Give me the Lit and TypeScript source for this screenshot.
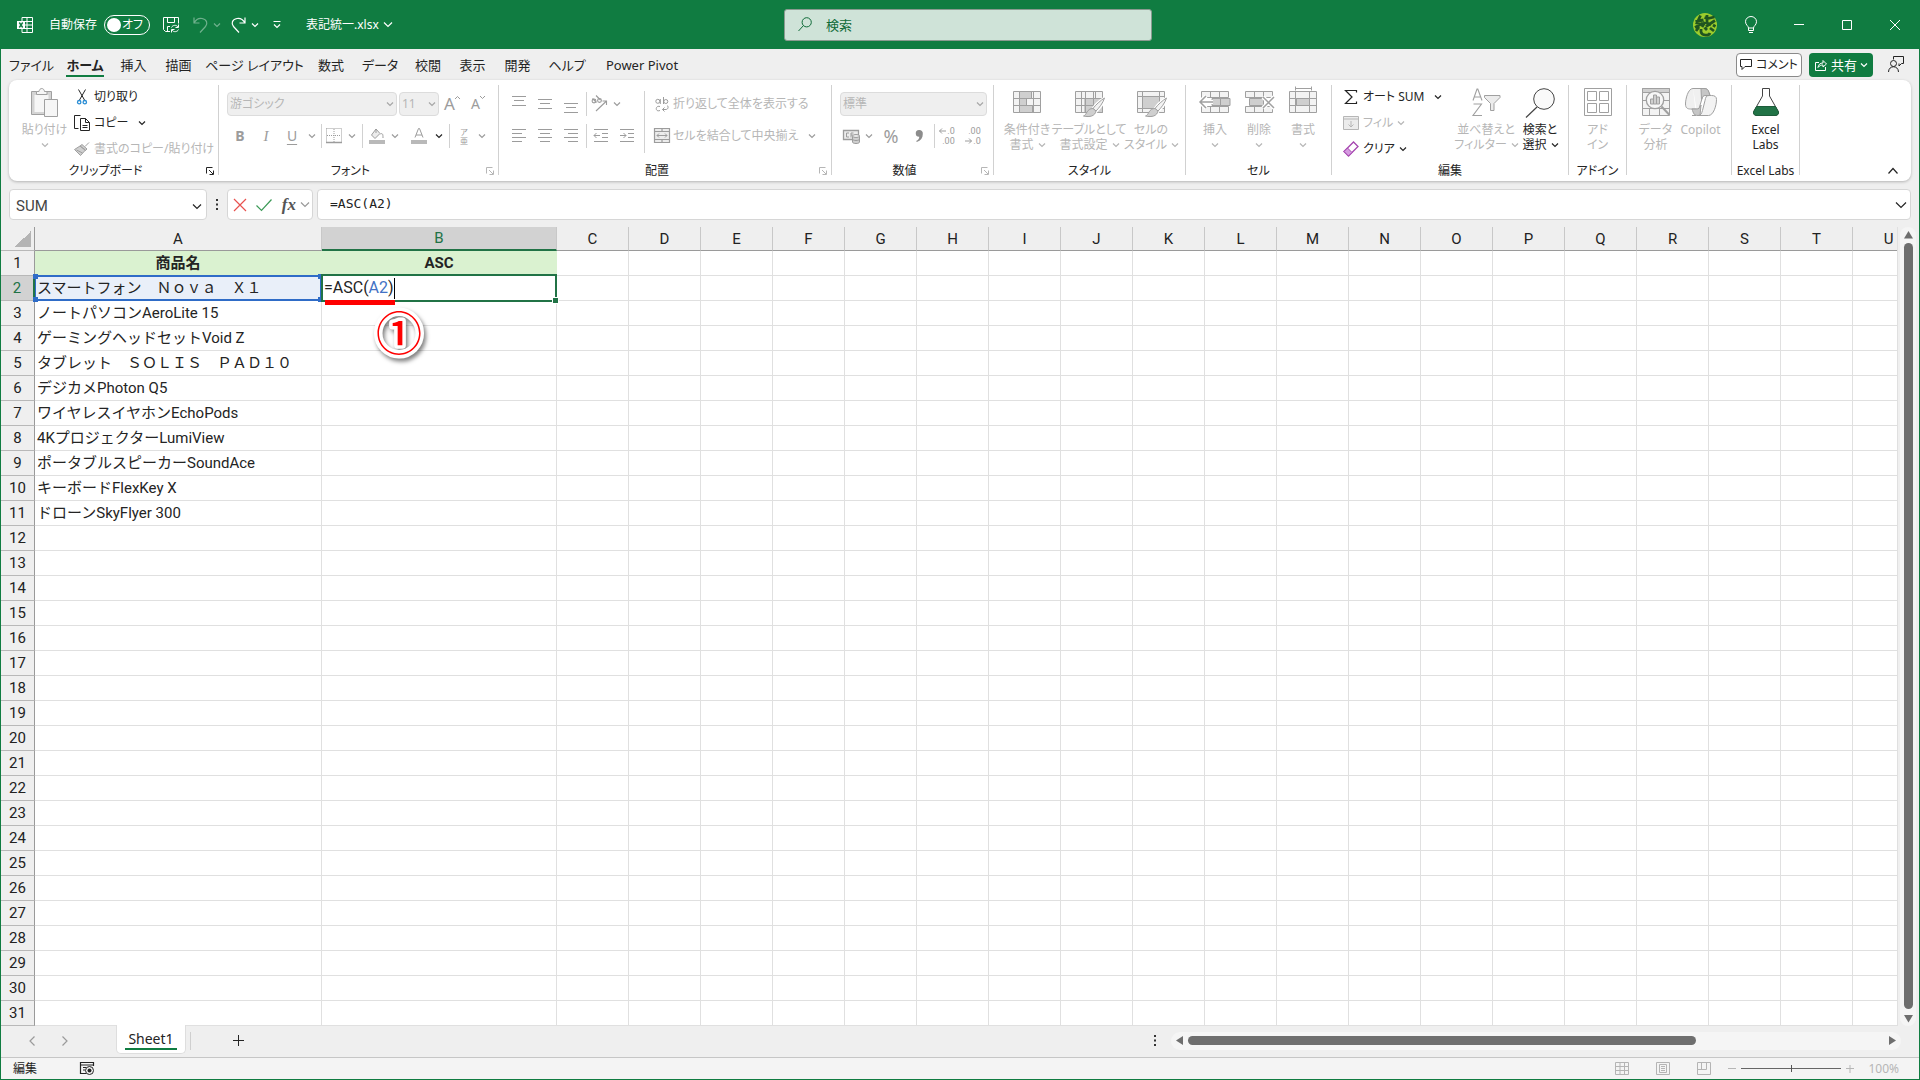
import { LitElement, html, svg, css, nothing } from "lit";
import type { TemplateResult } from "lit";
import { customElement, property, state } from "lit/decorators.js";
import { classMap } from "lit/directives/class-map.js";

/* ---------- shared styles ---------- */

const base = css`
  :host {
    display: block;
    font-family: "Noto Sans", "Noto Sans CJK JP", sans-serif;
    font-size: 12px;
    line-height: 16px;
    color: #242424;
    --brand: #107c41;
    --muted: #b6b6b6;
    --line: #a0a0a0;
    --surface: #efefef;
  }
  *,
  *::before,
  *::after {
    box-sizing: border-box;
  }
  button,
  input,
  select {
    font: inherit;
    color: inherit;
    background: none;
    border: 0;
    padding: 0;
    margin: 0;
    outline: 0;
    font-feature-settings: inherit;
  }
  button {
    display: inline-flex;
    align-items: center;
    justify-content: center;
    white-space: nowrap;
  }
  svg {
    display: block;
    flex: none;
    fill: none;
    stroke: currentColor;
    overflow: visible;
  }
`;

/* ---------- icons ---------- */

const icon = (w: number, h: number, body: unknown) =>
  html`<svg width=${w} height=${h} viewBox="0 0 ${w} ${h}" aria-hidden="true">${body}</svg>`;

const chevron = (w = 6) =>
  icon(w, w / 2 + 1, svg`<path d="M0 .5l${w / 2} ${w / 2}l${w / 2} -${w / 2}" stroke-width="1.2"/>`);

const lines = (rows: [number, number, number][], size = 16) =>
  icon(size, size, svg`<path d=${rows.map(([x, y, w]) => `M${x} ${y}.5h${w}`).join("")} />`);

const G = "#a0a0a0";
const F = "#ececec";
const D = "#cfcfcf";

const gridBox = (extra: unknown) => icon(
  28, 28,
  svg`<path d="M.5 3.500h27v21h-27z" fill="#f3f3f3" stroke=${G}/>
    <path d="M.5 10.500h27M.5 17.500h27M6.500 3.500v21M20.500 3.500v21" stroke=${G}/>${extra}`,
);

const brush = svg`
  <path d="M29 10.500c-4 2.500-9 7-11 10.500l3 2.500c3-3 7-8 8.500-12z" fill="#f3f3f3" stroke="#fff" stroke-width="3"/>
  <path d="M29.500 10c-4 2.500-9 7-11.500 10.500l3 2.500c3-3 7-8 8.500-13z" fill="#f3f3f3" stroke=${G}/>
  <path d="M18 20.500l3 2.500c-1 5-6 6.500-12.500 5c3.500-1 3-7.500 9.500-7.500z" fill=${D} stroke=${G}/>`;

const icons = {
  excel: icon(16, 16, svg`<path d="M5 4V.5h10.500v15H5V12M5 4.500h10.500M5 8h10.500M5 11.500h10.500M10 .5v15"/>
    <path d="M0 4h8v8H0z" fill="#fff" stroke="none"/><path d="M2.300 5.500l3.400 5M5.700 5.500l-3.400 5" stroke="#107c41" stroke-width="1.400"/>`),
  save: icon(16, 16, svg`<path d="M7 14.500H2.500l-2-2V.5h15v6M4.500 .5v5h7v-5M4.500 14.500v-5H7"/>
    <path d="M8.500 10.500c1-2.500 5-3 6.500-.5M15.500 7.500v3h-3M15.500 12.500c-1 2.500-5 3-6.500 .5M8.500 15.500v-3h3"/>`),
  undo: icon(15, 16, svg`<path d="M1 .5v5.500h5.500M1 6c2-3.500 5-5 8-4.500c5 1 6 5 3.500 8l-5.500 6" stroke-width="1.200"/>`),
  redo: icon(15, 16, svg`<path d="M14 .5v5.500H8.500M14 6c-2-3.500-5-5-8-4.500c-5 1-6 5-3.500 8l5.500 6" stroke-width="1.200"/>`),
  qat: icon(8, 8, svg`<path d="M.5 .5h7M1 3.500l3 3 3-3" stroke-width="1.200"/>`),
  search: icon(14, 15, svg`<circle cx="8.700" cy="5.300" r="4.600"/><path d="M5.500 8.500L.5 14"/>`),
  avatar: icon(24, 24, svg`<circle cx="12" cy="12" r="12" fill="#9ccc2c" stroke="none"/>
    <path d="M2.500 8.500l8-1.500M7.500 2.500L4 10l6 1.500M2 14.500l8-4.500M11.500 4.500l3 1 7-1.500M14 2v8l4 2M22 7.500l-9 6M20 12l2.500 1.500M6 14l-3 4M8 16v3c1 4 8 4 9 1M11.500 14.500l2.500 2.500M17 15l4 3M12 9l-3 5" stroke="#1f5420" stroke-width="2.800"/>`),
  bulb: icon(12, 17, svg`<path d="M3.500 12c0-2-3-3-3-6.300a5.500 5.200 0 0 1 11 0c0 3.300-3 4.300-3 6.300zM3.500 12v2.500h5V12M4 16.500h4"/>`),
  min: icon(10, 10, svg`<path d="M0 4.500h10"/>`),
  max: icon(10, 10, svg`<path d="M.5 .5h9v9h-9z"/>`),
  close: icon(10, 10, svg`<path d="M0 0l10 10M10 0L0 10"/>`),
  comment: icon(12, 11, svg`<path d="M.5 .5h11v7H5l-3 3v-3H.5z"/>`),
  share: icon(12, 12, svg`<path d="M4 3.500H.5v8h10V8M3 8.500c.5-3 2-4.500 5-4.500V1.500L11.500 5 8 8V6C6 6 4.500 6.500 3 8.500z"/>`),
  present: icon(16, 17, svg`<path d="M5.500 3.500V.5h10v7h-2l-2.500 2.500V7.500"/><circle cx="5.500" cy="7.500" r="3"/><path d="M.5 16c0-7 10-7 10 0"/>`),
  paste: icon(28, 30, svg`<path d="M.5 3.500h20v23H.5z" fill="#d4d4d4" stroke=${G}/><path d="M3.500 7h14v17h-14z" fill="#f6f6f6" stroke="none"/>
    <path d="M5.500 6.500v-3h2.500c.5-4 5-4 5.500 0H16v3z" fill="#f6f6f6" stroke=${G}/><path d="M13.500 11.500h13v17h-13z" fill="#f6f6f6" stroke=${G}/>`),
  cut: icon(10, 16, svg`<path d="M1.500 .5L7.500 11M8.500 .5L2.500 11"/><circle cx="2.200" cy="13.200" r="1.700" stroke="#2a8dd4" stroke-width="1.300"/><circle cx="7.800" cy="13.200" r="1.700" stroke="#2a8dd4" stroke-width="1.300"/>`),
  copy: icon(16, 16, svg`<path d="M4.500 13.500h-4V.5h6"/><path d="M6.500 3.500h5l4 4v8h-9zM11.500 3.500v4h4M8.500 10.500h5M8.500 12.500h5"/>`),
  format: icon(16, 14, svg`<path d="M15 .5l-4 4M8 2.500l5 4.500-1.500 1.500L6 4zM6 4L.5 7.500l6 6 5-5.500z" fill=${D} stroke=${G}/><path d="M2.500 8l6 3" stroke=${G}/>`),
  borders: icon(16, 16, svg`<path d="M.5 .5h15v14M.5 .5v14M8 1v13M1 7.500h14" stroke-dasharray="1 1"/><path d="M0 14.500h16" stroke-width="1.500"/>`),
  fill: icon(16, 16, svg`<path d="M7 1l4 4.500-5 5L2.500 7z" fill=${F}/><path d="M7 1v4M11.500 6c2-1 2.500 0 2.500 4"/><path d="M0 12h16v4H0z" fill="#b9b9b9" stroke="none"/>`),
  fontColor: icon(16, 16, svg`<path d="M4 9.500L7.500 .5h1l3.500 9M5 7h6"/><path d="M0 12h16v4H0z" fill="#b9b9b9" stroke="none"/>`),
  orient: icon(16, 16, svg`<g stroke-width="1.100"><circle cx="3" cy="5" r="1.900"/><path d="M1.500 2.500l4 4"/><circle cx="8.500" cy="4.500" r="1.900"/><path d="M5 -.5l4.500 4.500M5 15L15.500 5M11.500 5h4v4"/></g>`),
  wrap: icon(14, 15, svg`<circle cx="2.800" cy="4.300" r="2"/><path d="M5.300 2v5M8.500 0v7"/><circle cx="10.800" cy="4.500" r="2"/><path d="M5 9.500c-5-1.500-5 6 0 4M12 8.500c2 1 1 4-1 4H7.500M9.500 10.500l-2 2 2 2"/>`),
  merge: icon(16, 16, svg`<path d="M.5 .5h15v14h-15zM.5 3.500h15M.5 11.500h15M8 .5v3M8 11.500v3" fill=${F} stroke-width="1.200"/><path d="M3 7.500h10M5 5.500l-2 2 2 2M11 5.500l2 2-2 2"/>`),
  currency: icon(17, 15, svg`<path d="M.5 1.500h15v9H.5z" fill=${F} stroke-width="1.300"/><path d="M6 4H3.500v4H6M8 8.500V4h2.500M8 6h2"/>
    <path d="M9.500 7v6c0 2 7 2 7 0V7z" fill=${D}/><ellipse cx="13" cy="7" rx="3.500" ry="1.500" fill=${F}/><path d="M9.500 10c0 2 7 2 7 0"/>`),
  comma: icon(8, 12, svg`<path d="M4 0a3.500 3.500 0 0 1 3.800 4c0 4-2 6.500-6 8l-.6-.9c2-1 3-2.400 3.100-4.300A3.400 3.400 0 0 1 4 0z" fill="#8c8c8c" stroke="none"/>`),
  cond: gridBox(svg`<path d="M6.500 3.500h12v7h-12zM6.500 10.500h7v7h-7zM6.500 17.500h13v7h-13z" fill=${D} stroke=${G}/>`),
  tableFmt: gridBox(svg`<path d="M10 10.500h17.500v14H10z" fill=${D} stroke=${G}/><path d="M10.500 3.500v21M18.500 3.500v21M.5 17.500h27" stroke=${G}/>${brush}`),
  cellStyle: icon(28, 28, svg`<path d="M.5 3.500h27v21h-27z" fill="#f3f3f3" stroke=${G}/><path d="M.5 8.500h27M.5 20.500h27M5.500 3.500v21M22.500 3.500v21" stroke=${G}/>
    <path d="M5.500 8.500h17v12h-17z" fill=${D} stroke=${G}/>${brush}`),
  insert: icon(28, 28, svg`<path d="M.5 3.500h27v6h-27zM.5 18.500h27v6h-27zM9.500 3.500v6M18.500 3.500v6M9.500 18.500v6M18.500 18.500v6" fill="#f3f3f3" stroke=${G}/>
    <path d="M11 10.500h18v7H11zM19.500 10.500v7" fill=${D} stroke=${G}/><path d="M12 14H-1M5 8l-6 6 6 6" stroke="#fff" stroke-width="4"/><path d="M12 14H-1M5 8l-6 6 6 6" stroke=${G} stroke-width="1.500"/>`),
  remove: icon(28, 28, svg`<path d="M.5 3.500h27v6h-27zM.5 18.500h27v6h-27zM9.500 3.500v6M18.500 3.500v6M9.500 18.500v6M18.500 18.500v6" fill="#f3f3f3" stroke=${G}/>
    <path d="M4.500 10.500h14v7h-14z" fill=${D} stroke=${G}/><path d="M18 9l11 11M29 9L18 20" stroke="#fff" stroke-width="4"/><path d="M18 9l11 11M29 9L18 20" stroke=${G} stroke-width="1.500"/>`),
  cellFmt: gridBox(svg`<path d="M7.500 10.500h13v7h-13z" fill=${D} stroke=${G}/><path d="M7 .5h15M6.500 -1.500v4M22.500 -1.500v4" stroke=${G}/>`),
  sigma: icon(12, 14, svg`<path d="M11.500 2.500v-2H.5L7 7 .5 13.500h11v-2" stroke-width="1.200"/>`),
  fillDown: icon(16, 14, svg`<path d="M.5 .5h15v13H.5z" fill=${F}/><path d="M.5 3h15M8 5v6M5.500 8.500L8 11l2.500-2.500"/>`),
  clear: icon(16, 16, svg`<path d="M1 10.500L10.500 1l4.500 4.500L5.500 15z" stroke="#a646b0" stroke-width="1.300"/><path d="M1 10.500L4.500 7 9 11.500 5.500 15z" fill="#d59be0" stroke="#a646b0"/>`),
  sort: icon(28, 28, svg`<path d="M1 12.500L5 1h.8L10 12.500M2.500 9h6M1.500 16h8L1 27.500h9" stroke=${G} stroke-width="1.100"/><path d="M12.500 7.500h15.500v2l-6 6v7h-3.500v-7l-6-6z" fill=${F} stroke=${G}/>`),
  find: icon(30, 30, svg`<circle cx="19" cy="11" r="10.300" fill="#fafafa" stroke="#444"/><path d="M12 19L1 29.500" stroke="#444" stroke-width="1.200"/>`),
  addin: icon(28, 28, svg`<path d="M.5 .5h27v27H.5zM3.500 3.500h9v9h-9zM15.500 3.500h9v9h-9zM3.500 15.500h9v9h-9zM15.500 15.500h9v9h-9z" stroke=${G}/>`),
  analyze: icon(28, 28, svg`<path d="M.5 .5h27v27H.5z" fill="#f3f3f3" stroke=${G}/><path d="M.5 .5h27v4H.5z" fill=${D} stroke=${G}/><path d="M.5 12.500h27M.5 20.500h27M7.500 20v7M17.500 20v7" stroke=${G}/>
    <circle cx="13" cy="12" r="8.700" fill="#f7f7f7" stroke=${G} stroke-width="1.300"/><path d="M8.500 11h3v5h-3zM11.500 7h3v9h-3zM14.500 9h3v7h-3z" fill=${D} stroke=${G}/><path d="M19.500 18.500l8 8.500" stroke=${G} stroke-width="2"/>`),
  copilot: icon(32, 28, svg`<path d="M8 .5h11c3 0 4 1 5 4l1 3h-7l-4 13c-1.500 5-3 7-7 7h4M8 .5C3 .5 .5 11 .5 16c0 4 2 5 5 5h6" fill="#f0f0f0" stroke=${G}/>
    <path d="M16 .5h3c3 0 4 1 5 4l1 3h-4c-3 0-3.500 1-4.500 4z" fill="#c6c6c6" stroke=${G}/><path d="M15 27.500h-2c-4 0-4.500-2-6-6.500h4c3 0 4-1 5-4z" fill="#c6c6c6" stroke=${G}/>
    <path d="M21 7.500h5.500c3 0 5 1 5 4c0 6-3 16-8 16H13c3 0 3.500-2 4.500-5l2.500-10c.7-3 1-5 4-5z" fill="#f3f3f3" stroke=${G}/>`),
  flask: icon(26, 28, svg`<path d="M9.500 .5h7v7.500l8.500 15c1 2.500 0 4.500-3 4.500H4c-3 0-4-2-3-4.500L9.500 8z" fill="#fff" stroke="#444"/><path d="M3.500 18.500h19l3 5.500c.5 2-1 3.500-3.500 3.500H4C1.500 27.500 0 26 .5 24z" fill="#217346" stroke="#1d5c3a"/>`),
  collapse: icon(10, 6, svg`<path d="M.5 5.500l4.500-5 4.500 5" stroke-width="1.200"/>`),
  launch: icon(8, 8, svg`<path d="M.5 6.500v-6h6M3 3l4 4M7.500 3.500v4h-4"/>`),
  cancel: icon(12, 12, svg`<path d="M0 0l12 12M12 0L0 12" stroke="#e8524f" stroke-width="1.200"/>`),
  accept: icon(16, 12, svg`<path d="M.5 6.500l5 5L15.500 .5" stroke="#3c9a57" stroke-width="1.200"/>`),
  kebab: icon(2, 11, svg`<path d="M0 0h2v2H0zM0 4.500h2v2H0zM0 9h2v2H0z" fill="#333" stroke="none"/>`),
  prev: icon(6, 10, svg`<path d="M5.500 .5L1 5l4.500 4.500" stroke-width="1.200"/>`),
  next: icon(6, 10, svg`<path d="M.5 .5L5 5 .5 9.500" stroke-width="1.200"/>`),
  plus: icon(11, 11, svg`<path d="M5.500 0v11M0 5.500h11"/>`),
  triUp: icon(9, 8, svg`<path d="M4.500 0l4.500 7.500H0z" fill="#6e6e6e" stroke="none"/>`),
  triDown: icon(9, 8, svg`<path d="M4.500 7.500L9 0H0z" fill="#6e6e6e" stroke="none"/>`),
  triLeft: icon(7, 9, svg`<path d="M0 4.500L7 0v9z" fill="#6e6e6e" stroke="none"/>`),
  triRight: icon(7, 9, svg`<path d="M7 4.500L0 0v9z" fill="#6e6e6e" stroke="none"/>`),
  macro: icon(15, 13, svg`<path d="M6 11.500H.5V.5h13V4M.5 3h13M3 5.500h3M3 8h2" stroke-width="1.200"/><circle cx="9.500" cy="8.500" r="4"/><circle cx="9.500" cy="8.500" r="2" fill="#222" stroke="none"/>`),
  viewGrid: icon(14, 13, svg`<path d="M.5 .5h13v12H.5zM.5 4.500h13M.5 8.500h13M5 .5v12M9.500 .5v12"/>`),
  viewPage: icon(14, 13, svg`<path d="M.5 .5h13v12H.5zM3.500 2.500h7v8h-7zM5 4.500h4M5 6.500h4M5 8.500h4"/>`),
  viewBreak: icon(14, 13, svg`<path d="M.5 .5h13v12H.5zM4.500 .5v7M.5 7.500h9v-7"/>`),
};

/* ---------- title bar ---------- */

@customElement("xl-titlebar")
class TitleBar extends LitElement {
  static styles = [
    base,
    css`
      .bar {
        display: grid;
        grid-template-columns: 1fr 368px 1fr;
        align-items: center;
        height: 49px;
        padding: 0 1px 0 17px;
        margin: 0 -1px;
        background: var(--brand);
        color: #fff;
        font-feature-settings: "palt";
      }
      .left {
        display: flex;
        align-items: center;
      }
      .auto {
        display: flex;
        align-items: center;
        gap: 7px;
        margin: 0 13px 0 16px;
      }
      .toggle {
        width: 46px;
        height: 20px;
        padding: 0 6px 0 2px;
        border: 1px solid #fff;
        border-radius: 10px;
        justify-content: space-between;
      }
      .knob {
        width: 14px;
        height: 14px;
        border-radius: 50%;
        background: #fff;
      }
      .quick {
        display: flex;
        align-items: center;
      }
      .quick button {
        height: 32px;
      }
      .undo,
      .redo {
        gap: 6px;
      }
      .undo {
        margin-left: 14px;
        opacity: 0.4;
      }
      .redo {
        margin-left: 11px;
      }
      .more {
        margin-left: 15px;
      }
      .file {
        gap: 5px;
        margin-left: 25px;
      }
      .search {
        display: flex;
        align-items: center;
        gap: 14px;
        height: 32px;
        padding: 0 13px;
        border: 1px solid #8a9a90;
        border-radius: 3px;
        background: #cfe3d8;
        color: #0f6b38;
      }
      .search input {
        flex: 1;
        min-width: 0;
        font-size: 13px;
      }
      .search input::placeholder {
        color: #0f6b38;
        opacity: 1;
      }
      .right {
        display: flex;
        align-items: center;
        justify-content: flex-end;
      }
      .right button {
        width: 48px;
        height: 48px;
      }
      .right .user {
        width: 44px;
      }
    `,
  ];

  @state() private autosave = false;

  render() {
    return html`<header class="bar">
      <div class="left">
        ${icons.excel}
        <div class="auto">
          <span id="as">自動保存</span>
          <button class="toggle" role="switch" aria-checked=${this.autosave} aria-labelledby="as"
            @click=${() => (this.autosave = !this.autosave)}>
            <span class="knob"></span><span>${this.autosave ? "オン" : "オフ"}</span>
          </button>
        </div>
        <div class="quick">
          <button aria-label="上書き保存">${icons.save}</button>
          <button class="undo" aria-label="元に戻す" disabled>${icons.undo}${chevron()}</button>
          <button class="redo" aria-label="やり直し">${icons.redo}${chevron()}</button>
          <button class="more" aria-label="クイック アクセス ツール バーのカスタマイズ">${icons.qat}</button>
        </div>
        <button class="file">表記統一.xlsx ${chevron(8)}</button>
      </div>
      <label class="search">${icons.search}<input type="search" placeholder="検索" aria-label="検索" /></label>
      <div class="right">
        <button class="user" aria-label="アカウント">${icons.avatar}</button>
        <button aria-label="ヒント">${icons.bulb}</button>
        <button aria-label="最小化">${icons.min}</button>
        <button aria-label="最大化">${icons.max}</button>
        <button aria-label="閉じる">${icons.close}</button>
      </div>
    </header>`;
  }
}

/* ---------- tabs and ribbon ---------- */

const TABS = ["ファイル", "ホーム", "挿入", "描画", "ページ レイアウト", "数式", "データ", "校閲", "表示", "開発", "ヘルプ", "Power Pivot"];

@customElement("xl-ribbon")
class Ribbon extends LitElement {
  static styles = [
    base,
    css`
      :host {
        font-feature-settings: "palt";
      }
      .tabs {
        display: flex;
        align-items: center;
        height: 31px;
        padding: 0 15px 0 3px;
      }
      .list {
        display: grid;
        grid-template-columns: 55px 52px 45px 45px 107px 46px 52px 44px 45px 45px 54px 96px;
        font-size: 13px;
        margin-right: auto;
      }
      .tab {
        display: flex;
        justify-content: center;
        white-space: nowrap;
        color: inherit;
        text-decoration: none;
      }
      .tab span {
        height: 24px;
        padding-top: 3px;
        line-height: 18px;
      }
      .tab.on span {
        font-weight: 700;
        border-bottom: 2px solid var(--brand);
      }
      .comment,
      .share {
        height: 24px;
        border-radius: 4px;
        gap: 4px;
      }
      .comment {
        width: 66px;
        border: 1px solid #8a8a8a;
        background: #fff;
        margin-right: 7px;
      }
      .share {
        width: 64px;
        background: var(--brand);
        color: #fff;
        font-size: 13px;
        margin-right: 15px;
      }
      .ribbon {
        display: flex;
        height: 101px;
        margin: 0 8px;
        background: #fff;
        border-radius: 8px;
        box-shadow: 0 1px 3px rgba(0, 0, 0, 0.25);
      }
      .rule {
        width: 1px;
        margin: 5px 0 6px;
        background: #d1d1d1;
      }
      .group {
        flex: none;
        display: flex;
        flex-direction: column;
        padding-top: 3px;
      }
      .body {
        display: flex;
        height: 80px;
      }
      .caption {
        display: flex;
        text-align: center;
        white-space: nowrap;
      }
      .caption span {
        flex: 1;
      }
      .caption button {
        width: 16px;
        height: 16px;
      }
      .clip { width: 209px; }
      .font { width: 279px; }
      .align { width: 332px; }
      .num { width: 161px; }
      .style { width: 191px; }
      .cell { width: 145px; }
      .edit { width: 236px; }
      .addin { width: 57px; }
      .ai { width: 104px; }
      .labs { width: 67px; }
      .clip .body,
      .cell .body,
      .align .body { padding-left: 7px; }
      .font .body,
      .num .body { padding-left: 8px; }
      .style .body { padding-left: 2px; }
      .edit .body { padding-left: 10px; }
      .ai .body { padding-left: 6px; }
      button:disabled {
        color: var(--muted);
      }
      .big {
        flex-direction: column;
        justify-content: flex-start;
        padding-top: 5px;
        line-height: 15px;
      }
      .pic {
        height: 34px;
      }
      .line {
        display: flex;
        align-items: center;
        gap: 5px;
        height: 15px;
      }
      .w45 { width: 45px; }
      .w44 { width: 44px; }
      .w57 { width: 57px; }
      .w62 { width: 62px; }
      .w67 { width: 67px; }
      .w60 { width: 60px; }
      .w48 { width: 48px; }
      .small {
        display: flex;
        flex-direction: column;
        align-items: flex-start;
        padding-top: 1px;
      }
      .small.edits {
        width: 114px;
      }
      .small button {
        height: 26px;
        gap: 5px;
      }
      .slot {
        display: flex;
        justify-content: center;
        width: 18px;
        margin-right: -2px;
      }
      .wide > :last-child {
        margin-left: 6px;
      }
      .two {
        display: flex;
        flex-direction: column;
        gap: 6px;
        padding-top: 9px;
      }
      .row {
        display: flex;
        align-items: center;
        height: 24px;
      }
      .row + .row {
        height: 28px;
      }
      .row button {
        height: 24px;
        color: #9c9c9c;
      }
      .row .txt {
        color: var(--muted);
        gap: 4px;
      }
      .txt .slot {
        color: #9c9c9c;
      }
      .b26 { width: 26px; }
      .b22 { width: 22px; }
      .c14 { width: 14px; }
      .b30 { width: 30px; }
      .row .ink { color: #242424; }
      .s {
        width: 1px;
        height: 24px;
        margin: 0 3px;
        background: #d1d1d1;
      }
      .s.tight {
        margin: 0 1px 0 2px;
      }
      .gap {
        width: 4px;
      }
      .tall {
        width: 1px;
        height: 62px;
        margin: 8px 8px 0 4px;
        background: #d1d1d1;
      }
      .merge {
        width: 166px;
      }
      .merge > :last-child {
        margin-left: auto;
      }
      .pick {
        display: flex;
        align-items: center;
        height: 24px;
        padding-right: 3px;
        border: 1px solid #dcdcdc;
        border-radius: 4px;
        background: var(--surface);
        color: #a6a6a6;
      }
      .pick select {
        flex: 1;
        min-width: 0;
        height: 22px;
        padding-left: 2px;
        appearance: none;
        opacity: 1;
        color: var(--muted);
      }
      .face { width: 170px; margin-right: 2px; }
      .size { width: 40px; }
      .form { width: 147px; }
      .big-a { font-size: 17px; }
      .mid-a { font-size: 14px; }
      .bold { font-weight: 700; font-size: 14px; }
      .ital { font: italic 15px "Liberation Serif", serif; }
      .under { font-size: 14px; text-decoration: underline; text-underline-offset: 3px; }
      .pct { font-size: 18px; }
      .ruby {
        display: flex;
        flex-direction: column;
        font-size: 8px;
        line-height: 9px;
      }
      .dec {
        display: flex;
        flex-direction: column;
        align-items: flex-end;
        font: 9px/10px Roboto, "DejaVu Sans", sans-serif;
      }
      .arrow {
        display: flex;
        align-items: center;
        gap: 1px;
      }
      .up {
        align-self: flex-start;
        padding-top: 4px;
      }
      .end {
        display: flex;
        flex: 1;
        align-items: flex-end;
        justify-content: flex-end;
        padding: 0 13px 7px 0;
      }
    `,
  ];

  @property({ type: Number }) active = 1;

  private group(cls: string, caption: string, body: TemplateResult, launch = 0) {
    return html`<section class="group ${cls}">
        <div class="body">${body}</div>
        <div class="caption">
          <span>${caption}</span>
          ${launch ? html`<button aria-label="${caption}の設定" ?disabled=${launch === 1}>${icons.launch}</button>` : nothing}
        </div>
      </section>
      <div class="rule"></div>`;
  }

  private big(cls: string, pic: TemplateResult, first: string, second: string | null, arrow = false, off = true) {
    return html`<button class="big ${cls}" ?disabled=${off}>
      <span class="pic">${pic}</span>
      <span class="line">${first}</span>
      <span class="line">${second}${arrow ? chevron() : nothing}</span>
    </button>`;
  }

  private tool(cls: string, label: string, body: unknown) {
    return html`<button class=${cls} aria-label=${label}>${body}</button>`;
  }

  private drop(ink = false) {
    return html`<button class="c14 ${ink ? "ink" : ""}" aria-label="その他">${chevron()}</button>`;
  }

  render() {
    const t = this.tool;
    const row2 = (a: number, b: number) => lines([[1, 1, 14], [a, 5, b], [1, 9, 14], [a, 13, b]]);
    return html`
      <div class="tabs">
        <nav class="list">
          ${TABS.map((name, i) => html`<a href="#tab${i}" class=${classMap({ tab: true, on: i === this.active })}><span>${name}</span></a>`)}
        </nav>
        <button class="comment">${icons.comment}コメント</button>
        <button class="share">${icons.share}共有 ${chevron()}</button>
        <button aria-label="プレゼンス">${icons.present}</button>
      </div>
      <div class="ribbon">
        ${this.group("clip", "クリップボード", html`
          ${this.big("w57", icons.paste, "貼り付け", null, true)}
          <div class="small">
            <button><span class="slot">${icons.cut}</span>切り取り</button>
            <button class="wide"><span class="slot">${icons.copy}</span>コピー ${chevron()}</button>
            <button disabled><span class="slot">${icons.format}</span>書式のコピー/貼り付け</button>
          </div>`, 2)}
        ${this.group("font", "フォント", html`<div class="two">
            <div class="row">
              <label class="pick face"><select disabled aria-label="フォント"><option>游ゴシック</option></select>${chevron()}</label>
              <label class="pick size"><select disabled aria-label="フォント サイズ"><option>11</option></select>${chevron()}</label>
              ${t("b26 big-a", "拡大", html`A<span class="up">${icon(5, 3, svg`<path d="M0 3l2.500-2.500L5 3"/>`)}</span>`)}
              ${t("b26 mid-a", "縮小", html`A<span class="up">${icon(5, 3, svg`<path d="M0 0l2.500 2.500L5 0"/>`)}</span>`)}
            </div>
            <div class="row">
              ${t("b26 bold", "太字", "B")}${t("b26 ital", "斜体", "I")}${t("b26 under", "下線", "U")}${this.drop()}
              <span class="s tight"></span>${t("b22", "罫線", icons.borders)}${this.drop()}
              <span class="s"></span>${t("b22", "塗りつぶしの色", icons.fill)}${this.drop()}
              <span class="gap"></span>${t("b26", "フォントの色", icons.fontColor)}${this.drop(true)}
              <span class="s"></span>${t("b22", "ふりがな", html`<span class="ruby"><span>ア</span><span>亜</span></span>`)}${this.drop()}
            </div>
          </div>`, 1)}
        ${this.group("align", "配置", html`
          <div class="two">
            <div class="row">
              ${t("b26", "上揃え", lines([[1, 0, 14], [3, 4, 10], [1, 9, 14]]))}
              ${t("b26", "上下中央揃え", lines([[1, 3, 14], [3, 7, 10], [1, 12, 14]]))}
              ${t("b26", "下揃え", lines([[1, 7, 14], [3, 11, 10], [1, 16, 14]]))}
              <span class="s tight"></span>${t("b22", "方向", icons.orient)}${this.drop()}
            </div>
            <div class="row">
              ${t("b26", "左揃え", row2(1, 10))}${t("b26", "中央揃え", row2(3, 10))}${t("b26", "右揃え", row2(5, 10))}
              <span class="s tight"></span>
              ${t("b26", "インデントを減らす", icon(16, 16, svg`<path d="M1 1.500h14M9 5.500h6M9 9.500h6M1 13.500h14M7 7.500H1M3.500 5L1 7.500 3.500 10"/>`))}
              ${t("b26", "インデントを増やす", icon(16, 16, svg`<path d="M1 1.500h14M9 5.500h6M9 9.500h6M1 13.500h14M1 7.500h6M4.500 5L7 7.500 4.500 10"/>`))}
            </div>
          </div>
          <div class="tall"></div>
          <div class="two">
            <div class="row"><button class="txt"><span class="slot">${icons.wrap}</span>折り返して全体を表示する</button></div>
            <div class="row merge"><button class="txt"><span class="slot">${icons.merge}</span>セルを結合して中央揃え</button>${this.drop()}</div>
          </div>`, 1)}
        ${this.group("num", "数値", html`<div class="two">
            <div class="row"><label class="pick form"><select disabled aria-label="表示形式"><option>標準</option></select>${chevron()}</label></div>
            <div class="row">
              ${t("b22", "通貨", icons.currency)}${this.drop()}${t("b30 pct", "パーセント", "%")}${t("b26", "桁区切り", icons.comma)}
              <span class="s tight"></span>
              ${t("b22", "小数点以下を増やす", html`<span class="dec"><span class="arrow">${icon(7, 6, svg`<path d="M7 3H.5M3 .5L.5 3 3 5.500"/>`)}.0</span><span>.00</span></span>`)}
              <span class="gap"></span>
              ${t("b22", "小数点以下を減らす", html`<span class="dec"><span>.00</span><span class="arrow">${icon(7, 6, svg`<path d="M0 3h6.500M4 .5L6.500 3 4 5.500"/>`)}.0</span></span>`)}
            </div>
          </div>`, 1)}
        ${this.group("style", "スタイル", html`
          ${this.big("w62", icons.cond, "条件付き", "書式", true)}
          ${this.big("w62", icons.tableFmt, "テーブルとして", "書式設定", true)}
          ${this.big("w62", icons.cellStyle, "セルの", "スタイル", true)}`)}
        ${this.group("cell", "セル", html`
          ${this.big("w44", icons.insert, "挿入", null, true)}
          ${this.big("w44", icons.remove, "削除", null, true)}
          ${this.big("w44", icons.cellFmt, "書式", null, true)}`)}
        ${this.group("edit", "編集", html`
          <div class="small edits">
            <button class="wide"><span class="slot">${icons.sigma}</span>オート SUM ${chevron()}</button>
            <button disabled><span class="slot">${icons.fillDown}</span>フィル ${chevron()}</button>
            <button><span class="slot">${icons.clear}</span>クリア ${chevron()}</button>
          </div>
          ${this.big("w60", icons.sort, "並べ替えと", "フィルター", true)}
          ${this.big("w48", icons.find, "検索と", "選択", true, false)}`)}
        ${this.group("addin", "アドイン", this.big("w57", icons.addin, "アド", "イン"))}
        ${this.group("ai", "", html`${this.big("w45", icons.analyze, "データ", "分析")}${this.big("w45", icons.copilot, "Copilot", null)}`)}
        ${this.group("labs", "Excel Labs", this.big("w67", icons.flask, "Excel", "Labs", false, false))}
        <div class="end"><button aria-label="リボンを折りたたむ">${icons.collapse}</button></div>
      </div>`;
  }
}

/* ---------- formula bar ---------- */

@customElement("xl-formula-bar")
class FormulaBar extends LitElement {
  static styles = [
    base,
    css`
      .bar {
        display: flex;
        align-items: center;
        height: 31px;
        margin: 8px 8px 7px;
      }
      .box {
        display: flex;
        align-items: center;
        height: 31px;
        border: 1px solid #d6d6d6;
        border-radius: 4px;
        background: #fff;
      }
      .name {
        width: 198px;
        padding: 3px 5px 0 6px;
      }
      .name input {
        flex: 1;
        min-width: 0;
        font: 15px Roboto, sans-serif;
        color: #444;
      }
      .dots {
        display: flex;
        justify-content: center;
        width: 20px;
      }
      .acts {
        width: 86px;
        justify-content: space-between;
        padding: 0 3px 0 6px;
        margin-right: 4px;
      }
      .fx {
        gap: 5px;
        font: italic 700 17px "Liberation Serif", serif;
        color: #555;
      }
      .fx svg {
        color: #999;
      }
      .text {
        flex: 1;
        padding: 0 4px 0 12px;
      }
      .text input {
        flex: 1;
        min-width: 0;
        font: 13px "DejaVu Sans Mono", monospace;
        color: #222;
        padding-bottom: 2px;
      }
    `,
  ];

  @property() name = "";
  @property() formula = "";

  render() {
    return html`<div class="bar">
      <div class="box name">
        <input aria-label="名前ボックス" .value=${this.name} />
        <button aria-label="名前の一覧">${chevron(8)}</button>
      </div>
      <span class="dots">${icons.kebab}</span>
      <div class="box acts">
        <button aria-label="キャンセル">${icons.cancel}</button>
        <button aria-label="入力">${icons.accept}</button>
        <button class="fx" aria-label="関数の挿入"><span>fx</span>${chevron(8)}</button>
      </div>
      <div class="box text">
        <input aria-label="数式バー" .value=${this.formula} />
        <button aria-label="数式バーの展開">${chevron(10)}</button>
      </div>
    </div>`;
  }
}

/* ---------- sheet grid ---------- */

const COLS = "ABCDEFGHIJKLMNOPQRSTU".split("");
const ROWS = 31;
const PRODUCTS = [
  "スマートフォン　Ｎｏｖａ　Ｘ１",
  "ノートパソコンAeroLite 15",
  "ゲーミングヘッドセットVoid Z",
  "タブレット　ＳＯＬＩＳ　ＰＡＤ１０",
  "デジカメPhoton Q5",
  "ワイヤレスイヤホンEchoPods",
  "4KプロジェクターLumiView",
  "ポータブルスピーカーSoundAce",
  "キーボードFlexKey X",
  "ドローンSkyFlyer 300",
];

@customElement("xl-grid")
class Grid extends LitElement {
  static styles = [
    base,
    css`
      :host {
        font-family: Roboto, "Noto Sans CJK JP", sans-serif;
        font-size: 15px;
      }
      .area {
        display: flex;
      }
      .view {
        flex: 1;
        min-width: 0;
        overflow: hidden;
        background: #fff;
        border-right: 1px solid #e0e0e0;
      }
      table {
        table-layout: fixed;
        width: 1891px;
        border-collapse: separate;
        border-spacing: 0;
      }
      .c0 { width: 34px; }
      .c1 { width: 287px; }
      .c2 { width: 235px; }
      .cn { width: 72px; }
      th,
      td {
        height: 25px;
        padding: 0;
        line-height: 20px;
        border: solid #e0e0e0;
        border-width: 0 1px 1px 0;
        white-space: nowrap;
      }
      th {
        font-weight: 400;
        background: var(--surface);
        color: #222;
      }
      thead th {
        height: 24px;
        border-color: #c8c8c8;
        border-bottom-color: #9a9a9a;
      }
      tbody th,
      .corner {
        border-color: #b8b8b8;
        border-right-color: #9a9a9a;
      }
      .corner {
        background: linear-gradient(135deg, transparent 50%, #b4b4b4 50%) 14px 4px / 16px 16px no-repeat var(--surface);
      }
      .on {
        background: #d2d2d2;
        color: #217346;
      }
      thead .on {
        border-bottom: 2px solid #217346;
      }
      tbody .on {
        border-right: 2px solid #217346;
      }
      .head {
        background: #daf2d0;
        border-color: #daf2d0;
        text-align: center;
        font-weight: 700;
      }
      .item {
        padding-left: 2px;
      }
      .ref,
      .cell {
        position: relative;
      }
      .ref {
        background: #e9eff9;
      }
      .range {
        position: absolute;
        inset: -1px 0 -1px 0;
        border: 2px solid #2f6cc7;
        border-width: 2px 1px;
      }
      .grip {
        position: absolute;
        width: 5px;
        height: 5px;
        background: #2f6cc7;
      }
      .tl { top: -2px; left: -2px; }
      .tr { top: -2px; right: -2px; }
      .bl { bottom: -2px; left: -2px; }
      .br { bottom: -2px; right: -2px; }
      .editor {
        position: absolute;
        inset: -2px -1px -2px -1px;
        border: 2px solid #217346;
        background: #fff;
        padding: 2px 0 0 1px;
        outline: 0;
        font-size: 16px;
        line-height: 20px;
      }
      .arg {
        color: #4472c4;
      }
      .caret {
        display: inline-block;
        width: 1px;
        height: 21px;
        background: #000;
        vertical-align: top;
      }
      .knob {
        position: absolute;
        right: -3px;
        bottom: -3px;
        width: 5px;
        height: 5px;
        background: #217346;
        outline: 1px solid #fff;
      }
      .mark {
        position: absolute;
        left: 3px;
        top: 24px;
        width: 70px;
        height: 5px;
        background: #f00;
      }
      .badge {
        position: absolute;
        left: 51px;
        top: 31px;
        filter: drop-shadow(2px 3px 2px rgba(0, 0, 0, 0.5));
        z-index: 1;
      }
      .badge text {
        font: 500 46px "Noto Sans CJK JP", sans-serif;
        fill: #f00;
        stroke: #fff;
        stroke-width: 7px;
        stroke-linejoin: round;
        paint-order: stroke;
      }
      .scroll {
        display: flex;
        flex-direction: column;
        align-items: center;
        gap: 3px;
        width: 16px;
        margin: 0 3px 0 2px;
        padding: 3px 0 2px;
        border-radius: 8px;
        background: #f5f5f5;
      }
      .scroll button {
        height: 10px;
      }
      .thumb {
        width: 9px;
        flex: 1;
        border-radius: 5px;
        background: #6e6e6e;
        margin-bottom: 2px;
      }
    `,
  ];

  private editor() {
    return html`<div class="editor" role="textbox" aria-label="セルの編集">=ASC(<span class="arg">A2</span>)<span class="caret"></span><span class="knob"></span></div>
      <span class="mark"></span>
      <svg class="badge" width="52" height="54" viewBox="0 0 52 54"><text x="26" y="43" text-anchor="middle">①</text></svg>`;
  }

  private cell(col: number, row: number) {
    if (row === 1 && col < 2) return html`<td class="head">${col ? "ASC" : "商品名"}</td>`;
    if (col === 1 && row === 2) return html`<td class="cell">${this.editor()}</td>`;
    if (col === 0 && row === 2)
      return html`<td class="item ref">${PRODUCTS[0]}<span class="range"></span>
        ${["tl", "tr", "bl", "br"].map((c) => html`<span class="grip ${c}"></span>`)}</td>`;
    if (col === 0) return html`<td class="item">${PRODUCTS[row - 2] ?? nothing}</td>`;
    return html`<td></td>`;
  }

  render() {
    return html`<div class="area">
      <div class="view">
        <table>
          <colgroup>
            <col class="c0" /><col class="c1" /><col class="c2" />
            ${COLS.slice(2).map(() => html`<col class="cn" />`)}
          </colgroup>
          <thead>
            <tr><th class="corner"></th>${COLS.map((c) => html`<th scope="col" class=${c === "B" ? "on" : ""}>${c}</th>`)}</tr>
          </thead>
          <tbody>
            ${Array.from({ length: ROWS }, (_, i) => i + 1).map(
              (r) => html`<tr><th scope="row" class=${r === 2 ? "on" : ""}>${r}</th>${COLS.map((_, c) => this.cell(c, r))}</tr>`,
            )}
          </tbody>
        </table>
      </div>
      <div class="scroll">
        <button aria-label="上へ">${icons.triUp}</button>
        <span class="thumb"></span>
        <button aria-label="下へ">${icons.triDown}</button>
      </div>
    </div>`;
  }
}

/* ---------- sheet tabs and status bar ---------- */

@customElement("xl-footer")
class Footer extends LitElement {
  static styles = [
    base,
    css`
      .sheets {
        display: flex;
        align-items: center;
        height: 31px;
        padding: 0 18px 2px 27px;
      }
      .nav {
        width: 8px;
        margin-right: 25px;
        color: #9a9a9a;
      }
      .sheet {
        align-self: flex-start;
        margin: -1px 4px 0 22px;
        padding: 4px 8px 3px;
        height: 29px;
        background: #fff;
        border: 1px solid #dedede;
        border-top: 0;
        border-radius: 0 0 5px 5px;
        color: inherit;
        text-decoration: none;
        font-size: 14px;
      }
      .sheet span {
        display: block;
        width: 52px;
        height: 21px;
        line-height: 19px;
        text-align: center;
        border-bottom: 2px solid var(--brand);
      }
      .bar {
        width: 1px;
        height: 18px;
        background: #cfcfcf;
      }
      .add {
        margin-left: 42px;
      }
      .split {
        margin: 0 15px 0 auto;
      }
      .scroll {
        display: flex;
        align-items: center;
        gap: 5px;
        width: 39%;
        height: 18px;
        padding: 0 5px;
        border-radius: 9px;
        background: #f5f5f5;
      }
      .track {
        flex: 1;
      }
      .thumb {
        width: 73%;
        height: 9px;
        border-radius: 5px;
        background: #6e6e6e;
      }
      .status {
        display: flex;
        align-items: center;
        height: 22px;
        padding: 0 20px 0 12px;
        border-top: 1px solid #c6c6c6;
        background: #f4f4f4;
      }
      .macro {
        margin: 0 auto 0 43px;
      }
      .views {
        display: flex;
        gap: 27px;
        margin-right: 17px;
        color: #b4b4b4;
      }
      .zoom {
        display: flex;
        align-items: center;
        gap: 5px;
        color: var(--muted);
      }
      .zoom output {
        margin-left: 9px;
      }
      input[type="range"] {
        appearance: none;
        width: 100px;
        height: 10px;
        background: linear-gradient(#666, #666) center / 100% 1px no-repeat;
      }
      input[type="range"]::-webkit-slider-thumb {
        appearance: none;
        width: 1px;
        height: 7px;
        background: #555;
      }
    `,
  ];

  render() {
    return html`
      <div class="sheets">
        <button class="nav" aria-label="前のシート">${icons.prev}</button>
        <button class="nav" aria-label="次のシート">${icons.next}</button>
        <a class="sheet" href="#sheet1"><span>Sheet1</span></a>
        <span class="bar"></span>
        <button class="add" aria-label="新しいシート">${icons.plus}</button>
        <span class="split">${icons.kebab}</span>
        <div class="scroll">
          <button aria-label="左へ">${icons.triLeft}</button>
          <div class="track"><div class="thumb"></div></div>
          <button aria-label="右へ">${icons.triRight}</button>
        </div>
      </div>
      <footer class="status">
        <span>編集</span>
        <button class="macro" aria-label="マクロの記録">${icons.macro}</button>
        <div class="views">
          <button aria-label="標準">${icons.viewGrid}</button>
          <button aria-label="ページ レイアウト">${icons.viewPage}</button>
          <button aria-label="改ページ プレビュー">${icons.viewBreak}</button>
        </div>
        <div class="zoom">
          <button aria-label="縮小">${icon(8, 8, svg`<path d="M0 3.500h8"/>`)}</button>
          <input type="range" min="0" max="200" value="100" aria-label="ズーム" />
          <button aria-label="拡大">${icon(8, 8, svg`<path d="M0 3.500h8M4 0v8"/>`)}</button>
          <output>100%</output>
        </div>
      </footer>`;
  }
}

/* ---------- page ---------- */

@customElement("app-root")
class AppRoot extends LitElement {
  static styles = [
    base,
    css`
      :host {
        min-height: 100vh;
        overflow: hidden;
        background: var(--surface);
        border: solid var(--brand);
        border-width: 0 1px 1px;
        box-sizing: border-box;
      }
    `,
  ];

  render() {
    return html`
      <xl-titlebar></xl-titlebar>
      <xl-ribbon></xl-ribbon>
      <xl-formula-bar name="SUM" formula="=ASC(A2)"></xl-formula-bar>
      <xl-grid></xl-grid>
      <xl-footer></xl-footer>`;
  }
}
